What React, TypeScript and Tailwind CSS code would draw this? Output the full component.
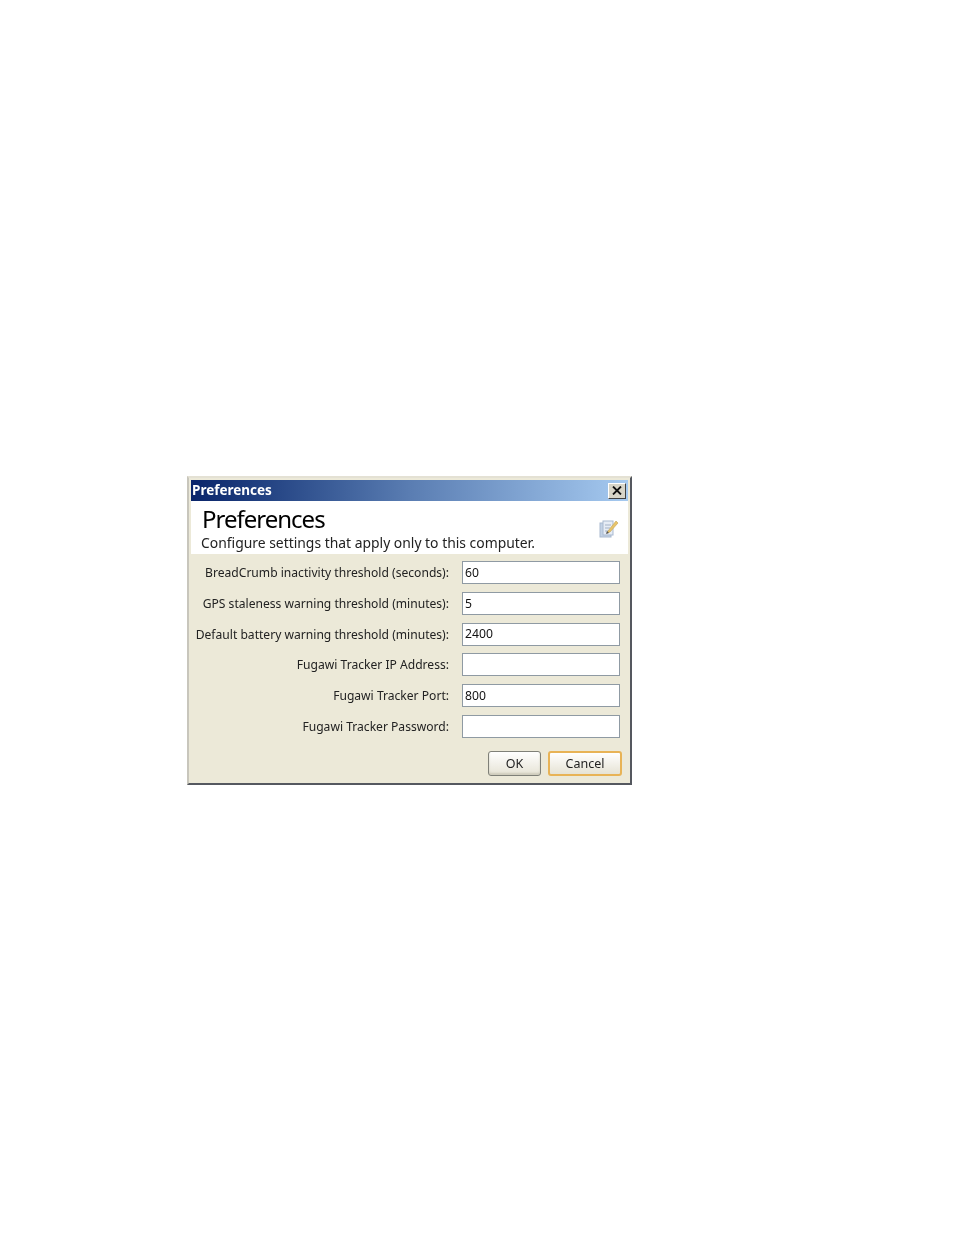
const rows = [
  { label: "BreadCrumb inactivity threshold (seconds):", value: "60" },
  { label: "GPS staleness warning threshold (minutes):", value: "5" },
  { label: "Default battery warning threshold (minutes):", value: "2400" },
  { label: "Fugawi Tracker IP Address:", value: "" },
  { label: "Fugawi Tracker Port:", value: "800" },
  { label: "Fugawi Tracker Password:", value: "" },
];

function PrefsIcon() {
  return (
    <svg width="20" height="20" viewBox="0 0 20 20">
      <rect x="1" y="4" width="11" height="14" fill="#c3d2e6" stroke="#a9b9cf" />
      <rect x="4" y="2" width="10" height="14" fill="#e6ecf5" stroke="#a9b9cf" />
      <path d="M6 6h6M6 9h5M6 12h4" stroke="#a3b1c6" />
      <path d="M9 12l8-10 2 2-8 9-3 1z" fill="#e8c46a" stroke="#c4a354" strokeWidth="0.6" />
      <path d="M8 12l2 2-3 1z" fill="#555" />
    </svg>
  );
}

export default function App() {
  return (
    <div className="min-h-[1235px] bg-white pt-[476px] pl-[187px] font-['Noto_Sans',sans-serif] blur-[0.5px]">
      <div className="w-[445px] h-[309px] flex flex-col bg-[#ece9d8] border-2 border-t-[#e4e1d4] border-l-[#c8c6bc] border-r-[#55585f] border-b-[#55585f] p-[2px]">
        <div className="h-[21px] flex items-center justify-between bg-gradient-to-r from-[#0a246a] via-[#5a7db2] to-[#a6caf0] pl-[1px] pr-[2px]">
          <span className="text-[13.5px] font-bold text-white leading-none">Preferences</span>
          <button className="w-[18px] h-[16px] flex items-center justify-center bg-[#d8d5c8] border border-t-white border-l-white border-r-[#404040] border-b-[#404040]">
            <svg width="10" height="9" viewBox="0 0 10 9">
              <path d="M1 0.5l8 8M9 0.5l-8 8" stroke="#111" strokeWidth="1.8" />
            </svg>
          </button>
        </div>

        <div className="h-[53px] flex items-center justify-between bg-white pl-[10px] pr-[9px]">
          <div className="flex flex-col">
            <span className="ml-[1px] text-[24px] leading-[30px] text-black tracking-[-1px]">Preferences</span>
            <span className="text-[13.9px] leading-[17px] text-[#222]">Configure settings that apply only to this computer.</span>
          </div>
          <div className="mt-[2px]">
            <PrefsIcon />
          </div>
        </div>

        <div className="flex flex-col gap-[7.8px] pt-[7px]">
          {rows.map((row) => (
            <div key={row.label} className="flex items-center h-[23px]">
              <span className="w-[258px] pt-[1px] text-right text-[12.1px] text-[#222] whitespace-nowrap">{row.label}</span>
              <div className="ml-[13px] w-[158px] h-[23px] flex items-center bg-white border border-[#8f9aa3] px-[2px] pt-[1px] text-[12.2px] text-[#111]">
                {row.value}
              </div>
            </div>
          ))}
        </div>

        <div className="flex justify-end gap-[7px] mt-[13px] pr-[6px]">
          <button className="w-[53px] h-[25px] rounded-[3px] border border-[#7f8078] bg-gradient-to-b from-white to-[#e6e3d5] shadow-[inset_0_-2px_2px_#cfccbc] pt-[1px] text-[12.5px] text-[#222]">
            OK
          </button>
          <button className="w-[74px] h-[25px] rounded-[3px] border-2 border-[#e8b356] bg-gradient-to-b from-white to-[#e6e3d5] pt-[1px] text-[12.5px] text-[#222]">
            Cancel
          </button>
        </div>
      </div>
    </div>
  );
}
